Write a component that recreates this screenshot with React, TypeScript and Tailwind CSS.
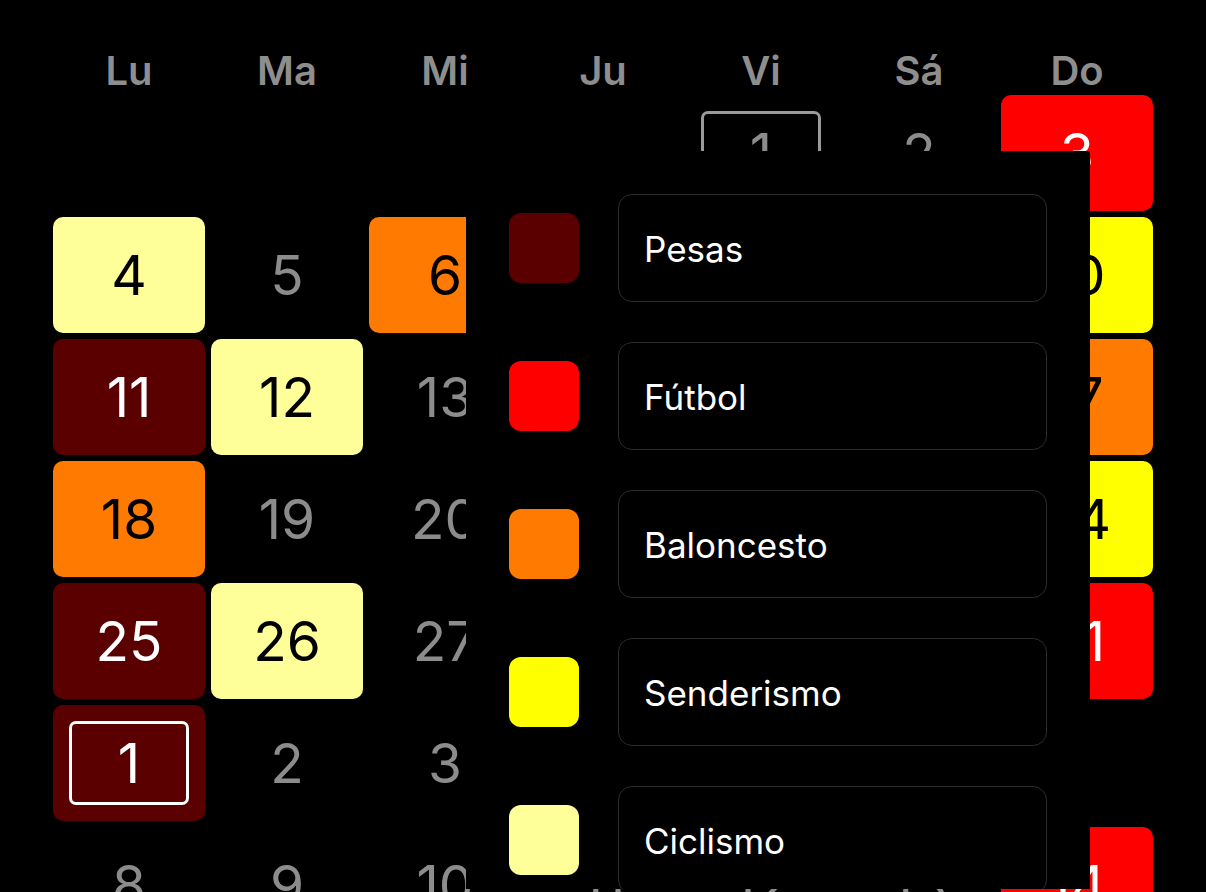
type Cell = { day: number; color?: string; marker?: 'gray' | 'white' } | null

const COLORS: Record<string, { bg: string; text: string }> = {
  pesas: { bg: 'bg-[#5a0000]', text: 'text-white' },
  futbol: { bg: 'bg-[#ff0000]', text: 'text-white' },
  baloncesto: { bg: 'bg-[#ff7a00]', text: 'text-black' },
  senderismo: { bg: 'bg-[#ffff00]', text: 'text-black' },
  ciclismo: { bg: 'bg-[#ffff99]', text: 'text-black' },
}

const weekDays = ['Lu', 'Ma', 'Mi', 'Ju', 'Vi', 'Sá', 'Do']

const weeks: Cell[][] = [
  [null, null, null, null, { day: 1, marker: 'gray' }, { day: 2 }, { day: 3, color: 'futbol' }],
  [{ day: 4, color: 'ciclismo' }, { day: 5 }, { day: 6, color: 'baloncesto' }, { day: 7, color: 'pesas' }, { day: 8 }, { day: 9 }, { day: 10, color: 'senderismo' }],
  [{ day: 11, color: 'pesas' }, { day: 12, color: 'ciclismo' }, { day: 13 }, { day: 14, color: 'futbol' }, { day: 15 }, { day: 16 }, { day: 17, color: 'baloncesto' }],
  [{ day: 18, color: 'baloncesto' }, { day: 19 }, { day: 20 }, { day: 21 }, { day: 22, color: 'pesas' }, { day: 23 }, { day: 24, color: 'senderismo' }],
  [{ day: 25, color: 'pesas' }, { day: 26, color: 'ciclismo' }, { day: 27 }, { day: 28 }, { day: 29 }, { day: 30 }, { day: 31, color: 'futbol' }],
  [{ day: 1, color: 'pesas', marker: 'white' }, { day: 2 }, { day: 3 }, { day: 4 }, { day: 5 }, { day: 6 }, { day: 7 }],
  [{ day: 8 }, { day: 9 }, { day: 10 }, { day: 11 }, { day: 12 }, { day: 13 }, { day: 14, color: 'futbol' }],
]

const activities = [
  { key: 'pesas', name: 'Pesas' },
  { key: 'futbol', name: 'Fútbol' },
  { key: 'baloncesto', name: 'Baloncesto' },
  { key: 'senderismo', name: 'Senderismo' },
  { key: 'ciclismo', name: 'Ciclismo' },
]

function DayCell({ cell }: { cell: Cell }) {
  if (!cell) return <div className="h-[116px]" />
  const c = cell.color ? COLORS[cell.color] : null
  return (
    <div
      className={`relative h-[116px] rounded-[10px] flex items-center justify-center text-[55px] leading-none ${
        c ? `${c.bg} ${c.text}` : 'text-[#8c8c8c]'
      }`}
    >
      {cell.marker && (
        <div
          className={`absolute inset-x-[16px] inset-y-[16px] rounded-[7px] border-[3px] ${
            cell.marker === 'white' ? 'border-white' : 'border-[#9a9a9a]'
          }`}
        />
      )}
      <span className="relative">{cell.day}</span>
    </div>
  )
}

export default function App() {
  return (
    <div
      className="relative h-screen overflow-hidden bg-black"
      style={{ fontFamily: 'Inter, "Noto Sans", sans-serif' }}
    >
      {/* Calendar */}
      <div className="px-[53px] pt-[49px] grid grid-cols-7 gap-x-[6px] gap-y-[6px]">
        {weekDays.map(d => (
          <div key={d} className="h-[40px] pt-[2px] text-center text-[40px] leading-[40px] font-semibold text-[#8e8e8e]">
            {d}
          </div>
        ))}
        {weeks.map((week, i) =>
          week.map((cell, j) => <DayCell key={`${i}-${j}`} cell={cell} />)
        )}
      </div>

      {/* Activity legend popover */}
      <div className="absolute left-[466px] top-[151px] w-[624px] h-[738px] overflow-hidden bg-black p-[43px] flex flex-col gap-[40px]">
        {activities.map(a => (
          <div key={a.key} className="h-[108px] shrink-0 flex items-center gap-[39px]">
            <div className={`w-[70px] h-[70px] rounded-[12px] shrink-0 ${COLORS[a.key].bg}`} />
            <div className="flex-1 h-full rounded-[14px] border-[1.5px] border-[#2c2c2c] flex items-center pl-[25px] pt-[2px] text-[35px] text-white">
              {a.name}
            </div>
          </div>
        ))}
      </div>
    </div>
  )
}
